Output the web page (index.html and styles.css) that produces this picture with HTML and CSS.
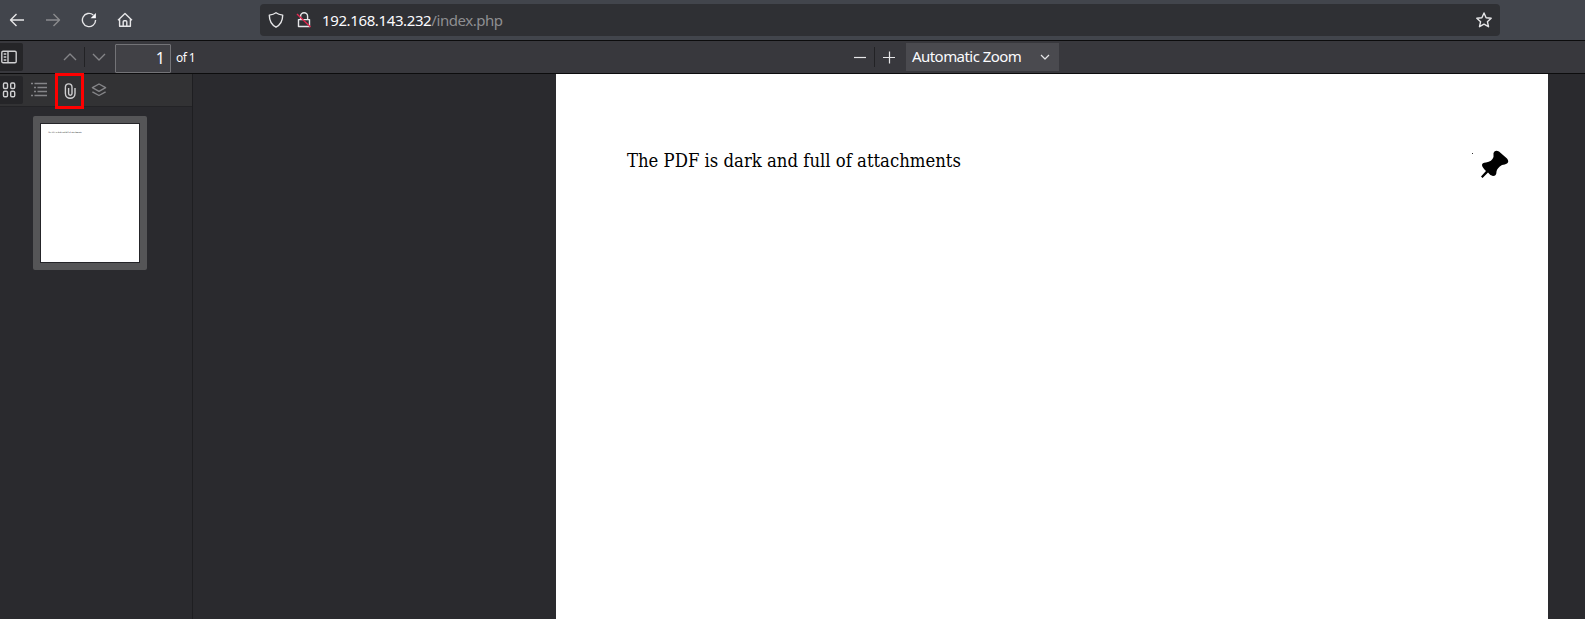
FILE: index.html
```html
<!DOCTYPE html>
<html lang="en">
<head>
    <meta charset="UTF-8">
    <meta name="viewport" content="width=device-width, initial-scale=1.0">
    <title>index.php</title>
    <link rel="stylesheet" href="styles.css">
</head>
<body>
    <header class="navbar">
        <div class="nav-buttons">
            <svg class="icon" viewBox="0 0 16 16"><path d="M15 8H1.5M7.5 2L1.5 8l6 6"/></svg>
            <svg class="icon disabled" viewBox="0 0 16 16"><path d="M1 8h13.5M8.5 2l6 6-6 6"/></svg>
            <svg class="icon" viewBox="0 0 16 16"><path d="M12.3 3A6.6 6.6 0 1 0 14.6 8"/><path class="solid" d="M14.9 1v5.3H9.6z"/></svg>
            <svg class="icon" viewBox="0 0 16 16"><path d="M1 8.2l7-6.8 7 6.8M2.6 7v7.3h10.8V7M6.2 14V9.8q0-1 1-1h1.6q1 0 1 1V14"/></svg>
        </div>
        <div class="urlbar">
            <svg class="icon shield" viewBox="0 0 16 16"><path d="M8 .8c2 1.500 4.200 2 6.700 2.300 0 5.500-1.700 9.500-6.700 12.100C3 12.600 1.300 8.600 1.300 3.100 3.800 2.800 6 2.300 8 .8z"/></svg>
            <svg class="icon lock" viewBox="0 0 16 16"><path d="M4.600 7V4.300a3.500 3.500 0 0 1 7 0V7M2.500 7.600h11v6.900h-11z"/><path class="strike" d="M1 2l13.500 13"/></svg>
            <div class="url"><span>192.168.143.232</span>/index.php</div>
            <svg class="icon star" viewBox="0 0 16 16"><path d="M8 1l2.100 4.700 5.100.5-3.800 3.500 1.100 5L8 12.100l-4.500 2.600 1.100-5L.8 6.200l5.100-.5z"/></svg>
        </div>
    </header>

    <div class="toolbar">
        <button class="toggle">
            <svg class="icon" viewBox="0 0 16 16"><rect x=".8" y="2.300" width="14.400" height="11.400" rx="1.300"/><path d="M7 2.300v11.400M2.700 5h2.600M2.700 8h2.600M2.700 11h2.600"/></svg>
        </button>
        <div class="pager">
            <svg class="icon dim" viewBox="0 0 16 16"><path d="M2 11l6-6 6 6"/></svg>
            <i class="sep"></i>
            <svg class="icon dim" viewBox="0 0 16 16"><path d="M2 5l6 6 6-6"/></svg>
        </div>
        <input class="page-number" type="text" value="1">
        <span class="page-count">of 1</span>
        <div class="zoom">
            <svg class="icon" viewBox="0 0 16 16"><path d="M2 8.500h12"/></svg>
            <i class="sep"></i>
            <svg class="icon" viewBox="0 0 16 16"><path d="M2 8.500h12M8.500 2.500v12"/></svg>
            <div class="scale">
                <span>Automatic Zoom</span>
                <svg class="icon" viewBox="0 0 16 16"><path d="M4 6l4 4 4-4"/></svg>
            </div>
        </div>
    </div>

    <div class="viewer">
        <aside class="sidebar">
            <div class="tabs">
                <button class="toggle">
                    <svg class="icon" viewBox="0 0 16 16"><rect x="2.500" y="1" width="4" height="5.500" rx="1.200"/><rect x="9.700" y="1" width="4" height="5.500" rx="1.200"/><rect x="2.500" y="9.300" width="4" height="5.500" rx="1.200"/><rect x="9.700" y="9.300" width="4" height="5.500" rx="1.200"/></svg>
                </button>
                <svg class="icon dim outline" viewBox="0 0 16 16"><path d="M0 1.500h2M3.500 1.500H16M3 5.500h2M6.500 5.500H16M3 9.500h2M6.500 9.500H16M0 13.500h2M3.500 13.500H16"/></svg>
                <div class="attachments">
                    <svg class="icon" viewBox="0 0 16 16"><path d="M13 5v5.500a4.800 4.800 0 0 1-9.600 0V4.200a3.300 3.300 0 0 1 6.600 0v6.300a1.700 1.700 0 0 1-3.400 0V5"/></svg>
                </div>
                <svg class="icon dim layers" viewBox="0 0 16 16"><path d="M8 2l6.600 3.700L8 9.400 1.400 5.700zM1.400 9.800L8 13.500l6.600-3.700"/></svg>
            </div>
            <div class="thumbnail">
                <div class="thumb-page">The PDF is dark and full of attachments</div>
            </div>
        </aside>
        <main class="canvas">
            <div class="page">
                <p>The PDF is dark and full of attachments</p>
                <i class="dot"></i>
                <svg class="pin" viewBox="0 0 28 28"><path d="M12.500 3Q14-.5 18 1.500l8 7q2.500 3 0 5-2 1-5 1.500-5 3-5.500 6.500 0 4.500-3.500 4.500-2.500 0-5-3.500L1.500 28 0 26.500 5 21Q1 17 1 15q0-2.500 4-2.500 6-1 7.500-5.500z"/></svg>
            </div>
        </main>
    </div>
</body>
</html>
```

FILE: styles.css
```css
* {
    box-sizing: border-box;
}
body {
    margin: 0;
    height: 100vh;
    display: flex;
    flex-direction: column;
    overflow: hidden;
    background: #2a2a2e;
    color: #fbfbfe;
    font-family: "Noto Sans", sans-serif;
    font-size: 15px;
}
.icon {
    display: block;
    flex: none;
    width: 16px;
    height: 16px;
    fill: none;
    stroke: #e6e6e8;
    stroke-width: 1.4;
    stroke-linejoin: round;
}
.icon.disabled { stroke: #8a8b8e; }
.icon.dim { stroke: #858588; }
.icon .solid { fill: #fbfbfe; stroke: none; }
.icon .strike { stroke: #e22850; }
.navbar {
    display: flex;
    align-items: center;
    flex: none;
    height: 41px;
    background: #42454c;
    border-bottom: 1px solid #0c0c0d;
}
.nav-buttons {
    display: flex;
    gap: 20px;
    width: 260px;
    padding-left: 9px;
}
.urlbar {
    display: flex;
    align-items: center;
    width: 1240px;
    height: 32px;
    padding: 0 8px;
    border-radius: 4px;
    background: #2f3034;
}
.lock { margin-left: 12px; }
.url {
    flex: 1;
    margin-left: 10px;
    color: #8e8e91;
    letter-spacing: -0.45px;
}
.url span {
    color: #fbfbfe;
    letter-spacing: -0.38px;
}
.toolbar {
    display: flex;
    align-items: center;
    flex: none;
    height: 33px;
    background: #38383d;
    border-bottom: 1px solid #0c0c0d;
}
.toggle {
    display: flex;
    align-items: center;
    width: 23px;
    height: 28px;
    padding: 0 0 0 1px;
    border: 0;
    border-radius: 0 2px 2px 0;
    background: #252528;
}
.toggle .icon, .attachments .icon { stroke: #cfcfd1; }
.pager {
    display: flex;
    align-items: center;
    margin-left: 39px;
    gap: 6px;
}
.sep {
    width: 1px;
    height: 20px;
    background: #222225;
}
.page-number {
    width: 56px;
    height: 29px;
    margin: 2px 0 0 8px;
    padding: 0 5px;
    border: 1px solid #737377;
    border-radius: 1px;
    background: #414146;
    color: #fbfbfe;
    font: 16px "Noto Sans", sans-serif;
    text-align: right;
}
.page-count {
    margin-left: 5px;
    font-size: 12px;
    letter-spacing: -0.6px;
}
.zoom {
    display: flex;
    align-items: center;
    margin-left: auto;
    margin-right: 526px;
    gap: 6px;
}
.zoom .icon { stroke-width: 1.2; }
.scale {
    display: flex;
    align-items: center;
    justify-content: space-between;
    width: 153px;
    height: 28px;
    margin-left: 3px;
    padding: 0 6px;
    background: #4a4a4f;
    letter-spacing: -0.55px;
}
.scale span { margin-bottom: 2px; }
.viewer {
    display: flex;
    flex: 1;
    min-height: 0;
}
.sidebar {
    width: 193px;
    border-right: 1px solid #1e1e21;
}
.tabs {
    display: flex;
    align-items: center;
    height: 33px;
    background: #323234;
    border-bottom: 1px solid #232326;
}
.outline { margin-left: 8px; }
.attachments {
    display: flex;
    align-items: center;
    justify-content: center;
    width: 29px;
    height: 36px;
    margin: 2px 0 0 8px;
    border: 3px solid #ff0000;
}
.layers { margin-left: 7px; }
.thumbnail {
    width: 114px;
    height: 154px;
    margin: 9px 0 0 33px;
    padding: 7px;
    border-radius: 2px;
    background: #555557;
}
.thumb-page {
    height: 140px;
    padding: 7px;
    border: 1px solid #252529;
    background: #fff;
    color: #000;
    font: condensed 1.85px/3px "DejaVu Serif", "DejaVu Serif Condensed", serif;
    white-space: nowrap;
}
.canvas {
    flex: 1;
    padding-left: 363px;
}
.page {
    display: flex;
    align-items: flex-start;
    width: 992px;
    height: 100%;
    padding: 74px 39px 0 71px;
    background: #fff;
    color: #000;
}
.page p {
    flex: 1;
    margin: 1px 0 0;
    font: condensed 18.33px/24px "DejaVu Serif", "DejaVu Serif Condensed", serif;
}
.dot {
    width: 1px;
    height: 1px;
    margin: 5px 8px 0 0;
    background: #333;
}
.pin {
    width: 28px;
    height: 28px;
    margin-top: 2px;
}
```
